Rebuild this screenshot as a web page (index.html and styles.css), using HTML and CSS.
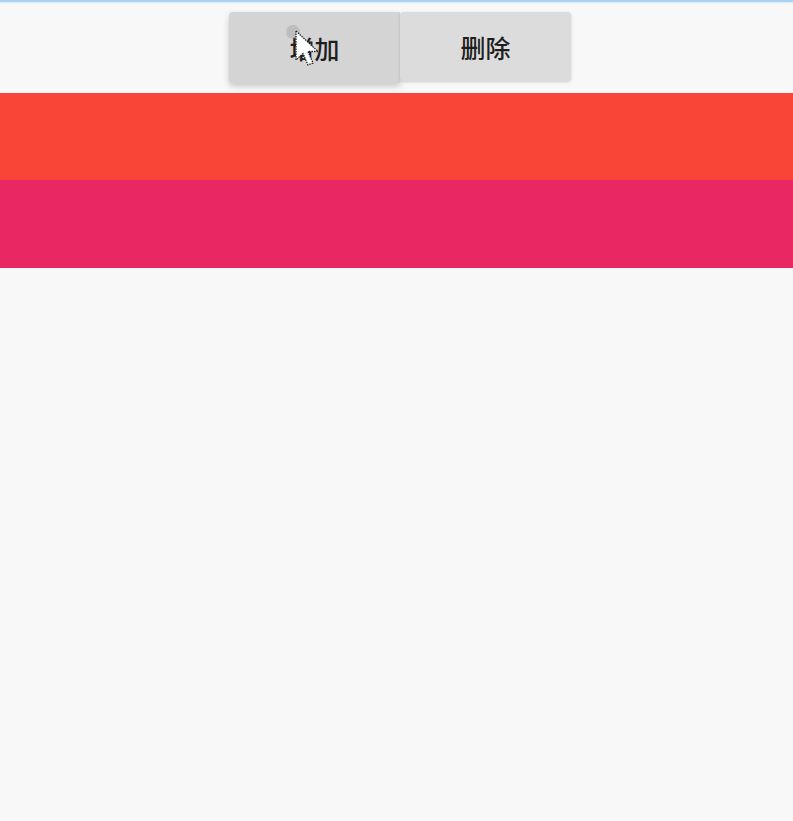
FILE: index.html
```html
<!DOCTYPE html>
<html>
<head>
<meta charset="utf-8">
<link rel="stylesheet" href="styles.css">
</head>
<body>
<div class="topline"></div>
<div class="toolbar">
  <div class="btns">
    <button class="btn pressed">增加</button>
    <button class="btn">删除</button>
    <span class="ripple"></span>
    <svg class="cursor" width="26" height="40" viewBox="0 0 26 40">
      <path d="M1 1 L1 30 L8 23.5 L13 35 L18 33 L13 21.5 L23 21.5 Z" fill="#fff" stroke="#222" stroke-width="1.3" stroke-dasharray="1.5 1"/>
    </svg>
  </div>
</div>
<div class="band red"></div>
<div class="band pink"></div>
</body>
</html>
```
FILE: styles.css
```css
html, body {
  margin: 0;
  padding: 0;
  background: #f8f8f8;
  font-family: "Noto Sans CJK SC", "Noto Sans", sans-serif;
}
.topline {
  height: 2px;
  background: #a9d2f3;
  box-shadow: 0 1px 2px #d6e6f2;
}
.toolbar {
  display: flex;
  justify-content: center;
  padding: 10px 0 10px 0;
}
.btns {
  position: relative;
  display: flex;
  margin-left: 7px;
}
.btn {
  width: 171px;
  height: 69px;
  border: none;
  border-radius: 4px;
  background: #dcdcdc;
  color: #1e1e1e;
  font-family: "Noto Sans CJK SC", sans-serif;
  font-size: 25px;
  font-weight: 500;
  box-shadow: 0 1px 3px rgba(0,0,0,0.18);
  padding: 0;
}
.btn.pressed {
  background: #d4d4d4;
  height: 71px;
  box-shadow: 0 3px 6px rgba(0,0,0,0.2);
  border-radius: 4px 0 0 4px;
}
.ripple {
  position: absolute;
  left: 57px;
  top: 13px;
  width: 14px;
  height: 14px;
  border-radius: 50%;
  background: rgba(140,140,140,0.3);
}
.cursor {
  position: absolute;
  left: 66px;
  top: 18px;
}
.band {
  height: 87px;
}
.red {
  background: #f84538;
}
.pink {
  height: 88px;
  background: #e82763;
  box-shadow: 0 2px 3px rgba(0,0,0,0.18);
}
```
